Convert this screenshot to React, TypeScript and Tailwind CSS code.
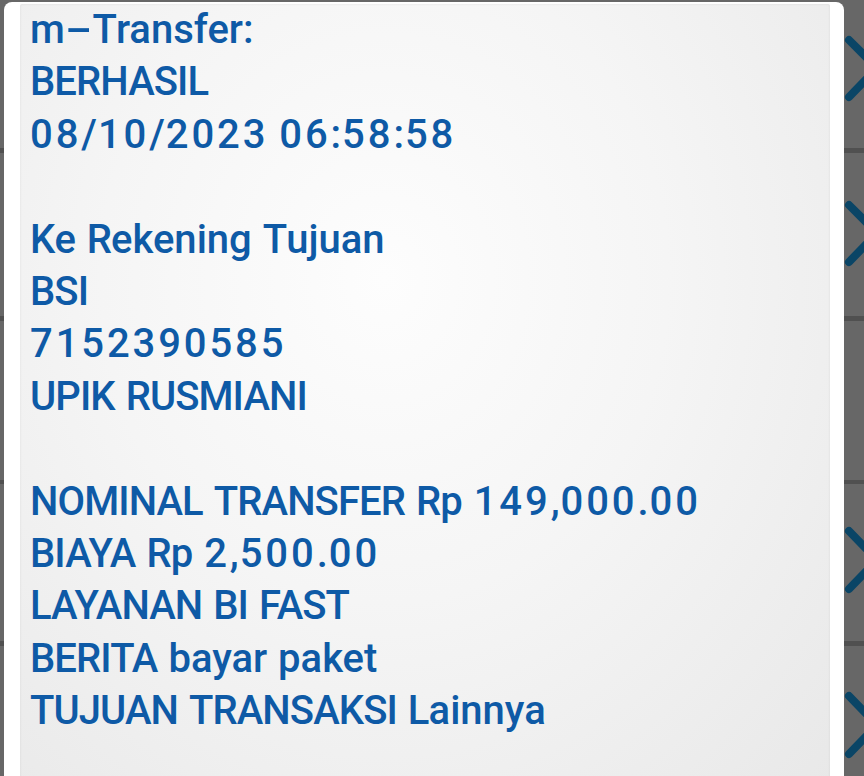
const LINES = [
  "m-Transfer:",
  "BERHASIL",
  "08/10/2023 06:58:58",
  "",
  "Ke Rekening Tujuan",
  "BSI",
  "7152390585",
  "UPIK RUSMIANI",
  "",
  "NOMINAL TRANSFER Rp 149,000.00",
  "BIAYA Rp 2,500.00",
  "LAYANAN BI FAST",
  "BERITA bayar paket",
  "TUJUAN TRANSAKSI Lainnya",
];

// chevrons peeking out from the list behind the dialog
const CHEVRONS = [
  [40, 68, 97],
  [205, 233, 262],
  [531, 560, 589],
  [696, 725, 754],
];

// the phone font has wide figures and a long dash, so space those runs apart
const runClass = {
  digit: "tracking-[2.9px]",
  upper: "tracking-[-0.9px]",
  lower: "",
  dash: "inline-block mx-[7px] scale-x-[2]",
  other: "tracking-[1px]",
};

type Kind = keyof typeof runClass;

function kindOf(ch: string): Kind {
  if (/[0-9]/.test(ch)) return "digit";
  if (/[A-Z]/.test(ch)) return "upper";
  if (/[a-z]/.test(ch)) return "lower";
  if (ch === "-") return "dash";
  return "other";
}

function splitRuns(text: string) {
  const runs: { kind: Kind; text: string }[] = [];
  for (const ch of text) {
    const k = kindOf(ch);
    const last = runs[runs.length - 1];
    if (last && last.kind === k) last.text += ch;
    else runs.push({ kind: k, text: ch });
  }
  return runs;
}

export default function App() {
  return (
    <div className="relative w-[864px] h-[776px] overflow-hidden bg-[#676767] font-['Roboto',Arial,sans-serif]">
      {/* Backdrop list rows */}
      <div className="flex flex-col">
        <div className="h-[148px]" />
        <div className="h-[5px] bg-[#505050]" />
        <div className="h-[163px]" />
        <div className="h-[5px] bg-[#505050]" />
        <div className="h-[159px]" />
        <div className="h-[4px] bg-[#505050]" />
        <div className="h-[157px]" />
        <div className="h-[5px] bg-[#505050]" />
        <div className="h-[130px]" />
      </div>

      <svg className="absolute left-[844px] top-0" width="20" height="776" viewBox="0 0 20 776">
        {CHEVRONS.map(([a, m, b]) => (
          <polyline
            key={a}
            points={`5,${a} 33,${m} 5,${b}`}
            fill="none"
            stroke="#0a4566"
            strokeWidth="8"
            strokeLinecap="round"
            strokeLinejoin="round"
          />
        ))}
      </svg>

      {/* Dialog */}
      <div className="absolute left-[4px] top-[2px] w-[840px] h-[800px] bg-white rounded-t-[8px] pl-[16px] pr-[14px] pt-[16px]">
        <div className="h-full rounded-[2px] bg-[radial-gradient(ellipse_at_45%_35%,#fdfdfd_0%,#f5f5f5_45%,#e8e8e8_100%)] shadow-[inset_0_0_3px_rgba(0,0,0,0.08)]">
          <div className="-mt-[14px] pl-[10px] text-[40px] font-medium leading-[52.4px] text-[#0e5aa6]">
            {LINES.map((line, i) => (
              <div key={i} className="whitespace-pre">
                {line
                  ? splitRuns(line).map((r, j) => (
                      <span key={j} className={runClass[r.kind]}>
                        {r.text}
                      </span>
                    ))
                  : "\u00a0"}
              </div>
            ))}
          </div>
        </div>
      </div>
    </div>
  );
}
